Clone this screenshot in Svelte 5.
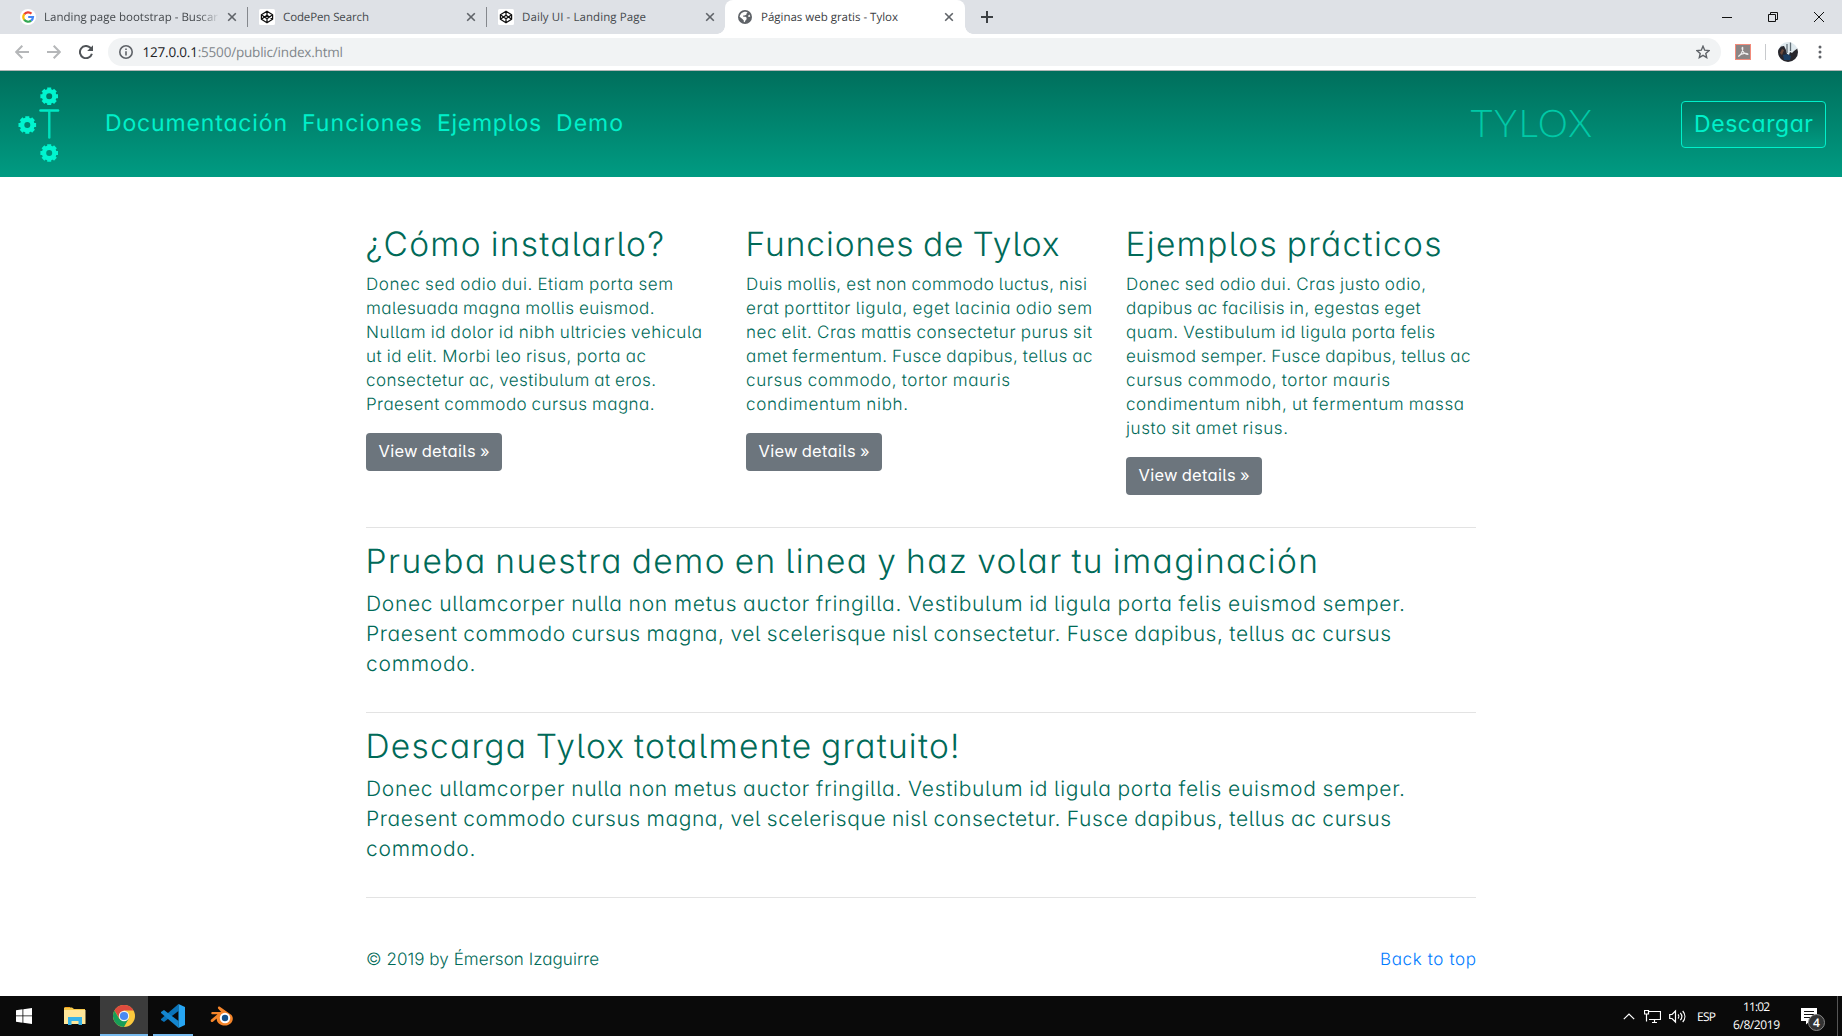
<script>
  // Spreads the letters of a line so that it spans the given width.
  function fit(node, width) {
    const count = [...node.textContent.trim()].length;
    node.style.letterSpacing = '0px';
    const natural = node.getBoundingClientRect().width;
    const spacing = (width - natural) / Math.max(1, count - 1);
    node.style.letterSpacing = `${spacing}px`;
    node.style.marginRight = `${-spacing}px`;
  }

  const tabs = [
    { title: 'Landing page bootstrap - Buscar', icon: 'google', width: 174, faded: true },
    { title: 'CodePen Search', icon: 'codepen', width: 86 },
    { title: 'Daily UI - Landing Page', icon: 'codepen', width: 124 },
    { title: 'Páginas web gratis - Tylox', icon: 'globe', width: 137, active: true }
  ];

  const links = [
    ['Documentación', 182],
    ['Funciones', 120],
    ['Ejemplos', 104],
    ['Demo', 67]
  ];

  const features = [
    {
      title: ['¿Cómo instalarlo?', 298.5],
      lines: [
        ['Donec sed odio dui. Etiam porta sem', 307],
        ['malesuada magna mollis euismod.', 288.5],
        ['Nullam id dolor id nibh ultricies vehicula', 336],
        ['ut id elit. Morbi leo risus, porta ac', 280],
        ['consectetur ac, vestibulum at eros.', 290],
        ['Praesent commodo cursus magna.', 288.5]
      ]
    },
    {
      title: ['Funciones de Tylox', 314],
      lines: [
        ['Duis mollis, est non commodo luctus, nisi', 341],
        ['erat porttitor ligula, eget lacinia odio sem', 346],
        ['nec elit. Cras mattis consectetur purus sit', 346],
        ['amet fermentum. Fusce dapibus, tellus ac', 346.5],
        ['cursus commodo, tortor mauris', 264],
        ['condimentum nibh.', 162]
      ]
    },
    {
      title: ['Ejemplos prácticos', 316],
      lines: [
        ['Donec sed odio dui. Cras justo odio,', 300],
        ['dapibus ac facilisis in, egestas eget', 294.5],
        ['quam. Vestibulum id ligula porta felis', 309],
        ['euismod semper. Fusce dapibus, tellus ac', 344.5],
        ['cursus commodo, tortor mauris', 264],
        ['condimentum nibh, ut fermentum massa', 338],
        ['justo sit amet risus.', 162]
      ]
    }
  ];

  const lead = [
    ['Donec ullamcorper nulla non metus auctor fringilla. Vestibulum id ligula porta felis euismod semper.', 1039],
    ['Praesent commodo cursus magna, vel scelerisque nisl consectetur. Fusce dapibus, tellus ac cursus', 1025],
    ['commodo.', 109.5]
  ];

  const sections = [
    { title: ['Prueba nuestra demo en linea y haz volar tu imaginación', 952.5] },
    { title: ['Descarga Tylox totalmente gratuito!', 594] }
  ];

  const gears = [[49.2, 25.3], [27.3, 54], [49.2, 82]];
  const teeth = [0, 45, 90, 135];
</script>

<div class="screen">
  <div class="tabstrip">
    {#each tabs as tab, i}
      <div class="tab" class:active={tab.active} class:divided={i < 2}>
        <svg class="favicon" viewBox="0 0 16 16">
          {#if tab.icon === 'google'}
            <circle cx="8" cy="8" r="8" fill="#fff" />
            <g fill="none" stroke-width="2.2">
              <path d="M4.2 5.3A4.9 4.9 0 0 1 11.5 4.6" stroke="#ea4335" />
              <path d="M4.2 5.2A5 5 0 0 0 4.2 10.8" stroke="#fbbc05" />
              <path d="M4.2 10.7A4.9 4.9 0 0 0 11.2 11.7" stroke="#34a853" />
              <path d="M8.2 8H13A4.9 4.9 0 0 1 11.1 11.7" stroke="#4285f4" />
            </g>
          {:else if tab.icon === 'codepen'}
            <rect width="16" height="16" rx="1.5" fill="#fff" />
            <path d="M8 2.2L13.6 5.8V10.2L8 13.8L2.4 10.2V5.8ZM8 2.2V6M8 13.8V10M2.4 5.8L8 9.8L13.6 5.8M2.4 10.2L8 6.2L13.6 10.2" fill="none" stroke="#111" stroke-width="1.25" stroke-linejoin="round" />
          {:else}
            <circle cx="8" cy="8" r="7" fill="#5f6368" />
            <path d="M7.4 2.7C9 2.6 10 2.9 10.6 3.4L9.4 4.7V5.7L7.4 6.6H6.2V7.8H8.6L9.6 8.8V10.2L8.4 11.6C8 13.4 7.2 13.4 6.8 13.1V11.4L5.4 10L2.6 7.8C2.8 5.6 4.8 3.1 7.4 2.7ZM13.3 7.4L11.8 7.9L11 7L12.4 5.6Z" fill="#fff" />
          {/if}
        </svg>
        <span class="title" class:faded={tab.faded}><span use:fit={tab.width}>{tab.title}</span></span>
        <svg class="close" viewBox="0 0 10 10"><path d="M1.2 1.2L8.8 8.8M8.8 1.2L1.2 8.8" /></svg>
      </div>
    {/each}
    <svg class="plus" viewBox="0 0 12 12"><path d="M6 0V12M0 6H12" /></svg>
    <div class="window">
      <svg viewBox="0 0 10 10"><path d="M0 5.5H10" /></svg>
      <svg viewBox="0 0 10 10"><path d="M.5 2.5H7.5V9.5H.5ZM2.5 2.5V.5H9.5V7.5H7.5" /></svg>
      <svg viewBox="0 0 10 10"><path d="M0 0L10 10M10 0L0 10" /></svg>
    </div>
  </div>

  <div class="toolbar">
    <svg class="nav-icon" viewBox="0 0 14 14"><path d="M14 7H1.5M7.3 .8L1.2 7L7.3 13.2" stroke="#b5b7b9" /></svg>
    <svg class="nav-icon" viewBox="0 0 14 14"><path d="M0 7H12.5M6.7 .8L12.8 7L6.7 13.2" stroke="#b5b7b9" /></svg>
    <svg class="nav-icon" viewBox="0 0 14 14"><path d="M12.9 8.8A6.1 6.1 0 1 1 11.4 2.8L12.7 4.4" stroke="#505458" /><path d="M14 .2V6H8.2Z" class="solid" /></svg>
    <div class="omnibox">
      <svg class="info" viewBox="0 0 14 14"><circle cx="7" cy="7" r="6.2" /><path d="M7 6.2V10.5M7 3.4V5" /></svg>
      <span class="url"><span use:fit={200.5}>127.0.0.1<em>:5500/public/index.html</em></span></span>
      <svg class="star" viewBox="0 0 14 14"><path d="M7 1.2L8.7 5.2L13 5.6L9.8 8.4L10.7 12.6L7 10.4L3.3 12.6L4.2 8.4L1 5.6L5.3 5.2Z" /></svg>
    </div>
    <svg class="ext" viewBox="0 0 16 16"><rect x=".5" y=".5" width="15" height="15" fill="#8b8585" stroke="#f28b7b" /><path d="M3.2 12.6C5.5 11.5 8.3 7 7.8 3.8C7.5 2.6 6.8 3.8 7.2 5.2C7.9 8.3 10.5 10.8 13 10.3C13 8.8 7 9 3.9 11.6" fill="none" stroke="#eee" stroke-width="1.1" /></svg>
    <i class="rule"></i>
    <svg class="avatar" viewBox="0 0 20 20">
      <clipPath id="face"><circle cx="10" cy="10" r="10" /></clipPath>
      <g clip-path="url(#face)">
        <rect width="20" height="20" fill="#dfe9ee" />
        <path d="M0 8L3 4.5L6 4L8 8L9 12L11 13L12 10L14 11L16 9L20 6V20H0Z" fill="#28272d" />
        <path d="M5 13L9 12L13 14L12 18L6 18Z" fill="#1a3e62" /><path d="M9 2V11M12.5 0V9" stroke="#637078" stroke-width="1.3" />
        <path d="M2 11L4 7L6 8L4 13Z" fill="#6a4a3b" />
      </g>
    </svg>
    <svg class="dots" viewBox="0 0 4 14"><circle cx="2" cy="2" r="1.5" /><circle cx="2" cy="7" r="1.5" /><circle cx="2" cy="12" r="1.5" /></svg>
  </div>

  <header>
    <svg class="logo" viewBox="0 0 70 106">
      {#each gears as [x, y]}
        <g transform="translate({x} {y})">
          <circle r="5.2" fill="none" stroke="#00f5cf" stroke-width="4.4" />
          {#each teeth as angle}
            <path d="M0 -8.8V-6M0 6V8.8" transform="rotate({angle})" stroke="#00f5cf" stroke-width="4" stroke-linecap="butt" />
          {/each}
        </g>
      {/each}
      <path d="M40.5 39.5H58" stroke="#00eac6" stroke-width="2.6" stroke-linecap="round" />
      <path d="M49.3 40V66.5" stroke="#00e0bd" stroke-width="2.4" stroke-linecap="round" />
    </svg>
    <nav>
      {#each links as [label, width]}
        <a href="#top"><span use:fit={width}>{label}</span></a>
      {/each}
    </nav>
    <span class="brand"><span use:fit={121.5}>TYLOX</span></span>
    <button class="download"><span use:fit={119}>Descargar</span></button>
  </header>

  <main>
    <div class="features">
      {#each features as feature}
        <article>
          <h2><span use:fit={feature.title[1]}>{feature.title[0]}</span></h2>
          <p>
            {#each feature.lines as [text, width]}
              <span class="line" use:fit={width}>{text}</span>
            {/each}
          </p>
          <button class="details"><span use:fit={111}>View details »</span></button>
        </article>
      {/each}
    </div>
    {#each sections as section}
      <hr />
      <section>
        <h2><span use:fit={section.title[1]}>{section.title[0]}</span></h2>
        <p class="lead">
          {#each lead as [text, width]}
            <span class="line" use:fit={width}>{text}</span>
          {/each}
        </p>
      </section>
    {/each}
    <hr />
    <footer>
      <span use:fit={233}>© 2019 by Émerson Izaguirre</span>
      <a href="#top"><span use:fit={96}>Back to top</span></a>
    </footer>
  </main>

  <div class="taskbar">
    <div class="app"><svg width="16" height="16" viewBox="0 0 16 16"><path d="M0 2.3L6.5 1.3V7.5H0ZM7.3 1.2L16 0V7.5H7.3ZM0 8.3H6.5V14.7L0 13.7ZM7.3 8.3H16V16L7.3 14.8Z" fill="#fff" /></svg></div>
    <div class="app explorer"><svg width="22" height="18" viewBox="0 0 22 18"><path d="M0 1.5V.5H8L10 2H21V17H0Z" fill="#f5c84c" /><path d="M1 .5H6" stroke="#f6a21c" stroke-width="1" /><path d="M0 3H21.5V17H0Z" fill="#ffe79a" /><path d="M4 18V10H18V18H14.5V14H7.5V18Z" fill="#36b3e8" /></svg></div>
    <div class="app current"><svg width="22" height="22" viewBox="0 0 22 22"><circle cx="11" cy="11" r="11" fill="#fbc93d" /><path d="M1.4 5.6A11 11 0 0 1 20.6 5.6H11L6.5 13.6Z" fill="#dd4b3e" /><path d="M1.4 5.6A11 11 0 0 0 11 22L15.6 13.8L11 16L6.3 13.8Z" fill="#189d58" /><circle cx="11" cy="11" r="5.2" fill="#f3f3f3" /><circle cx="11" cy="11" r="4.1" fill="#4989f4" /></svg></div>
    <div class="app open"><svg width="24" height="24" viewBox="0 0 24 24"><path d="M17.5 0V7L3 18L0 16V15Z" fill="#0a73b8" /><path d="M17.5 24V17L3 6L0 8V9Z" fill="#1486cf" /><path d="M17.5 0L24 3V21L17.5 24Z" fill="#27a5f2" /></svg></div>
    <div class="app blender"><svg width="24" height="20" viewBox="0 0 24 20"><path d="M9.5 .5L21.5 9C25 13.5 21 19.5 15 19.5C9.5 19.5 6.5 16 6.7 12.6L3 15.7C1.5 16.5 0 15 1 13.8L7.5 8.2H2.5C.8 8.2 1 6 2.5 6H11.2L8 2.6C7.5 1.3 8.4 0 9.5 .5Z" fill="#f5852a" /><circle cx="15" cy="12" r="5.2" fill="#fff" /><circle cx="15" cy="12" r="3.2" fill="#12508b" /></svg></div>
    <div class="tray">
      <svg width="12" height="7" viewBox="0 0 12 7"><path d="M.8 6.2L6 1L11.2 6.2" /></svg>
      <svg class="monitor" width="17" height="15" viewBox="0 0 17 15"><path d="M4.5 2.5H16.5V10.5H5M8 13.5H13M10.5 11V13M.5 1.5H4.5V5H.5ZM2.5 5V12.5" /></svg>
      <svg class="speaker" width="18" height="15" viewBox="0 0 18 15"><path d="M.7 5.5H3L6.5 2V13L3 9.5H.7ZM9 5.5C10 6.5 10 8.5 9 9.5M11.3 3.8C13.2 6 13.2 9 11.3 11.2M13.7 2C16.6 5.3 16.6 9.7 13.7 13" /></svg>
      <span class="lang"><span use:fit={19}>ESP</span></span>
      <div class="clock"><span use:fit={27}>11:02</span><span use:fit={47}>6/8/2019</span></div>
      <div class="notice">
        <svg width="16" height="17" viewBox="0 0 16 17"><path d="M0 0H16V13H9L5 16.5V13H0Z" /><path d="M3 3.5H13M3 6.5H13M3 9.5H9" /></svg>
        <b>4</b>
      </div>
      <i class="peek"></i>
    </div>
  </div>
</div>

<style>
  :global(body) { margin: 0; overflow: hidden; background: #fff; }
  .screen {
    width: 1842px; height: 1036px; display: flex; flex-direction: column; overflow: hidden;
    font-family: Inter, sans-serif; font-weight: 300; color: #006a58;
    font-feature-settings: 'cv11' 1, 'cv05' 1; text-rendering: geometricPrecision;
  }
  .screen :global(*) { box-sizing: border-box; }
  svg { display: block; flex: none; }
  span { white-space: nowrap; }
  a { color: inherit; text-decoration: none; }

  .tabstrip, .toolbar, .taskbar { font-family: 'Open Sans', 'Noto Sans', sans-serif; font-weight: 400; }
  .tabstrip { height: 34px; flex: none; display: flex; align-items: center; background: #dee1e6; padding-left: 8px; }
  .tab { width: 239px; height: 34px; display: flex; align-items: center; padding: 0 10px 0 12px; position: relative; color: #45494d; font-size: 11.5px; }
  .tab.divided::after { content: ''; position: absolute; right: -1px; top: 7px; width: 1px; height: 20px; background: #85888d; }
  .tab.active { background: #fff; border-radius: 8px 8px 0 0; width: 240px; padding-right: 11px; color: #3c4043; }
  .tab.active::before, .tab.active::after { content: ''; position: absolute; bottom: 0; width: 8px; height: 8px; }
  .tab.active::before { left: -8px; background: radial-gradient(circle at 0 0, transparent 7.5px, #fff 8px); }
  .tab.active::after { right: -8px; background: radial-gradient(circle at 100% 0, transparent 7.5px, #fff 8px); }
  .favicon { width: 16px; height: 16px; margin-right: 8px; }
  .title { flex: 1; height: 18px; line-height: 20px; overflow: hidden; }
  .title > span { display: inline-block; }
  .faded { -webkit-mask-image: linear-gradient(90deg, #000 155px, transparent 176px); mask-image: linear-gradient(90deg, #000 155px, transparent 176px); }
  .close { width: 10px; height: 10px; margin-left: 3px; }
  .close path { fill: none; stroke: #5f6368; stroke-width: 1.6; }
  .plus { width: 12px; height: 12px; margin-left: 16px; }
  .plus path { stroke: #3c4043; stroke-width: 2; }
  .window { margin-left: auto; display: flex; gap: 36px; padding-right: 18px; height: 28px; align-items: center; }
  .window svg { width: 10px; height: 10px; }
  .window path { fill: none; stroke: #111; stroke-width: 1; }

  .toolbar { height: 37px; flex: none; display: flex; align-items: center; background: #fff; border-bottom: 1px solid #b1b7b6; padding-left: 15px; }
  .nav-icon { width: 14px; height: 14px; margin-right: 18px; }
  .nav-icon path { fill: none; stroke-width: 2; }
  .nav-icon path.solid { fill: #505458; }
  .nav-icon:nth-child(3) { margin-right: 15px; }
  .omnibox { width: 1613px; height: 28px; border-radius: 14px; background: #f1f3f4; display: flex; align-items: center; padding: 0 11px; }
  .info, .star { width: 14px; height: 14px; }
  .info circle, .info path { fill: none; stroke: #5f6368; stroke-width: 1.6; }
  .star path { fill: none; stroke: #5f6368; stroke-width: 1.4; }
  .url { flex: 1; margin-left: 9.5px; font-size: 13.5px; line-height: 20px; color: #202124; }
  .url > span { display: inline-block; }
  .url em { font-style: normal; color: #80868b; }
  .ext { width: 16px; height: 16px; margin-left: 14px; }
  .rule { width: 1px; height: 16px; background: #c8cacd; margin: 0 12px 0 14px; }
  .avatar { width: 20px; height: 20px; }
  .dots { width: 4px; height: 14px; margin-left: 20px; fill: #5f6368; }

  header { height: 106px; flex: none; display: flex; background: linear-gradient(#006f5c, #009b82); color: #00f0ca; }
  .logo { width: 70px; height: 106px; margin-right: 35px; }
  nav { display: flex; gap: 15px; font-size: 23px; font-weight: 400; line-height: 30px; padding-top: 37px; }
  nav span, .brand span, h2 span, footer span, button span { display: inline-block; }
  .brand { margin-left: auto; width: 210.5px; font-family: Lato, sans-serif; font-weight: 300; font-size: 38px; line-height: 46px; padding-top: 29px; color: #00c9a7; }
  .download { width: 145px; height: 47px; margin: 30px 16px 0 0; padding: 0 0 2px; border: 1px solid #00f0ca; border-radius: 4px; background: linear-gradient(#006f5c, #009b82); color: inherit; font: inherit; font-size: 23px; font-weight: 400; line-height: 30px; font-feature-settings: inherit; }

  main { width: 1110px; height: 819px; margin: 0 auto; padding-top: 50px; }
  .features { display: grid; grid-template-columns: repeat(3, 350px); column-gap: 30px; height: 300px; }
  h2 { margin: 0; height: 46px; padding-top: 1px; font-size: 33.5px; font-weight: 300; line-height: 34px; word-spacing: -2px; }
  h2 span { margin-left: -0.5px; }
  p { margin: 0 0 16px; font-size: 17px; line-height: 24px; word-spacing: -0.7px; }
  .line { display: block; width: max-content; }
  .details { width: 136px; height: 38px; display: flex; justify-content: center; align-items: center; padding: 0 0 2px; border: 0; border-radius: 4px; background: #6c757d; color: #fff; font: inherit; font-size: 16.5px; font-weight: 400; font-feature-settings: inherit; word-spacing: -1px; }
  hr { margin: 0 0 16px; border: 0; height: 1px; background: #e3e3e3; }
  section { height: 168px; }
  .lead { font-size: 21px; line-height: 30px; }
  footer { display: flex; justify-content: space-between; padding-top: 34px; font-size: 17px; line-height: 24px; }
  footer a { color: #007bff; }

  .taskbar { height: 40px; flex: none; display: flex; background: #0a0a0a; color: #fff; }
  .app { width: 48px; height: 40px; display: flex; align-items: center; justify-content: center; }
  .explorer { width: 52px; padding-left: 2px; }
  .current { background: #3c3c3c; box-shadow: inset 0 -2px #76b9ed; }
  .open { width: 40px; margin: 0 5px; box-shadow: inset 0 -2px #76b9ed; }
  .tray { margin-left: auto; display: flex; align-items: center; }
  .tray path { fill: none; stroke: #fff; stroke-width: 1.2; }
  .monitor { margin-left: 9px; }
  .speaker { margin-left: 8px; }
  .lang { margin-left: 10px; font-size: 12px; width: 36px; }
  .lang span { display: inline-block; }
  .clock { width: 47px; display: flex; flex-direction: column; align-items: center; font-size: 12px; line-height: 18px; }
  .notice { width: 57px; padding-left: 21px; position: relative; }
  .notice path:first-child { fill: #fff; stroke: none; }
  .notice path:last-child { stroke: #111; }
  .notice b { position: absolute; left: 28px; top: 6px; width: 17px; height: 17px; border: 1px solid #888; border-radius: 50%; background: #333; font-size: 12px; font-weight: 600; line-height: 15px; text-align: center; }
  .peek { width: 1px; height: 40px; background: #555; margin-right: 4px; }
</style>
